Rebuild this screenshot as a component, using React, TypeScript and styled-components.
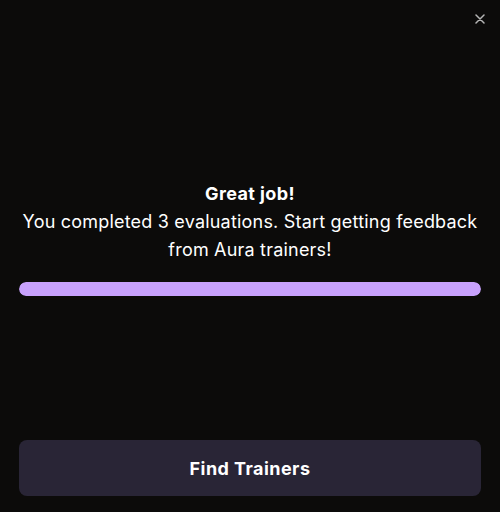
import React from "react";
import styled, { createGlobalStyle } from "styled-components";

const Global = createGlobalStyle`
  html, body { margin: 0; padding: 0; background: #0c0b0a; }
  body { font-family: "Inter", "Liberation Sans", sans-serif; }
  * { box-sizing: border-box; }
`;

const Modal = styled.div`
  position: relative;
  width: 500px;
  height: 512px;
  background: #0c0b0a;
  display: flex;
  flex-direction: column;
  padding: 0 19px 16px;
`;

const Close = styled.button`
  position: absolute;
  top: 12px;
  right: 13px;
  width: 14px;
  height: 14px;
  padding: 0;
  border: 0;
  background: transparent;
  color: #b5b5b5;
  display: flex;
  align-items: center;
  justify-content: center;
  cursor: pointer;
`;

const Body = styled.div`
  flex: 1;
  display: flex;
  flex-direction: column;
  padding-top: 180px;
`;

const Title = styled.div`
  color: #fff;
  font-weight: 700;
  font-size: 18px;
  line-height: 28px;
  letter-spacing: 0.4px;
  text-align: center;
`;

const Text = styled.div`
  color: #fff;
  font-weight: 400;
  font-size: 18px;
  line-height: 28px;
  letter-spacing: 0.2px;
  text-align: center;
`;

const Track = styled.div`
  margin-top: 18px;
  height: 14px;
  border-radius: 7px;
  background: #2a2634;
  overflow: hidden;
`;

const Fill = styled.div`
  height: 100%;
  background: #c8a1fc;
  border-radius: 7px;
`;

const Button = styled.button`
  height: 56px;
  border: 0;
  border-radius: 8px;
  background: #292536;
  color: #fff;
  font-family: inherit;
  font-weight: 700;
  font-size: 18px;
  letter-spacing: 0.45px;
  cursor: pointer;
`;

export default function App() {
  const progress = 100;
  return (
    <>
      <Global />
      <Modal>
        <Close aria-label="Close">
          <svg width="10" height="10" viewBox="0 0 10 10">
            <path d="M1 1 L9 9 M9 1 L1 9" stroke="currentColor" strokeWidth="1.5" strokeLinecap="round" />
          </svg>
        </Close>
        <Body>
          <Title>Great job!</Title>
          <Text>
            You completed 3 evaluations. Start getting feedback
            <br />
            from Aura trainers!
          </Text>
          <Track>
            <Fill style={{ width: `${progress}%` }} />
          </Track>
        </Body>
        <Button>Find Trainers</Button>
      </Modal>
    </>
  );
}
